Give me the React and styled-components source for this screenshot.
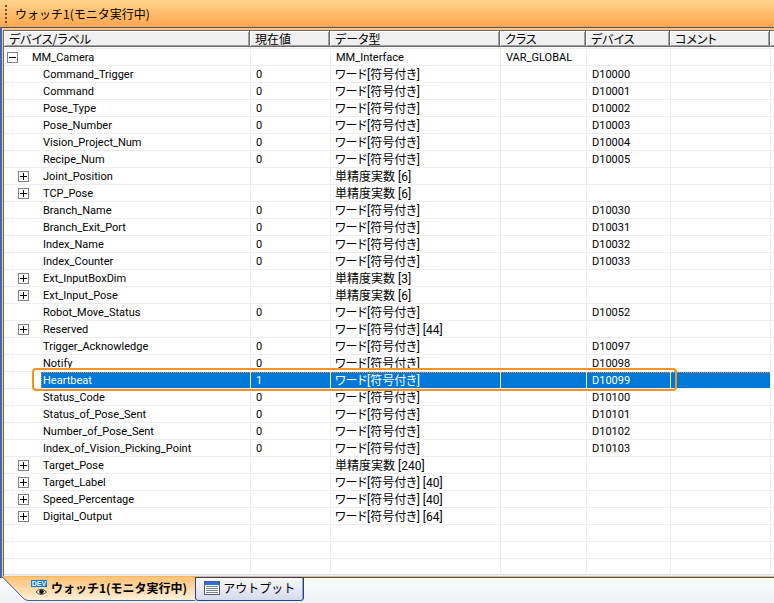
import styled, { createGlobalStyle } from "styled-components";
import { useState } from "react";

const WORD = "ワード[符号付き]";
const REAL = "単精度実数";

const ROWS = [
  { name: "MM_Camera", level: 0, toggle: "minus", type: "MM_Interface", cls: "VAR_GLOBAL" },
  { name: "Command_Trigger", value: "0", type: WORD, device: "D10000" },
  { name: "Command", value: "0", type: WORD, device: "D10001" },
  { name: "Pose_Type", value: "0", type: WORD, device: "D10002" },
  { name: "Pose_Number", value: "0", type: WORD, device: "D10003" },
  { name: "Vision_Project_Num", value: "0", type: WORD, device: "D10004" },
  { name: "Recipe_Num", value: "0", type: WORD, device: "D10005" },
  { name: "Joint_Position", toggle: "plus", type: `${REAL} [6]` },
  { name: "TCP_Pose", toggle: "plus", type: `${REAL} [6]` },
  { name: "Branch_Name", value: "0", type: WORD, device: "D10030" },
  { name: "Branch_Exit_Port", value: "0", type: WORD, device: "D10031" },
  { name: "Index_Name", value: "0", type: WORD, device: "D10032" },
  { name: "Index_Counter", value: "0", type: WORD, device: "D10033" },
  { name: "Ext_InputBoxDim", toggle: "plus", type: `${REAL} [3]` },
  { name: "Ext_Input_Pose", toggle: "plus", type: `${REAL} [6]` },
  { name: "Robot_Move_Status", value: "0", type: WORD, device: "D10052" },
  { name: "Reserved", toggle: "plus", type: `${WORD} [44]` },
  { name: "Trigger_Acknowledge", value: "0", type: WORD, device: "D10097" },
  { name: "Notify", value: "0", type: WORD, device: "D10098" },
  { name: "Heartbeat", value: "1", type: WORD, device: "D10099" },
  { name: "Status_Code", value: "0", type: WORD, device: "D10100" },
  { name: "Status_of_Pose_Sent", value: "0", type: WORD, device: "D10101" },
  { name: "Number_of_Pose_Sent", value: "0", type: WORD, device: "D10102" },
  { name: "Index_of_Vision_Picking_Point", value: "0", type: WORD, device: "D10103" },
  { name: "Target_Pose", toggle: "plus", type: `${REAL} [240]` },
  { name: "Target_Label", toggle: "plus", type: `${WORD} [40]` },
  { name: "Speed_Percentage", toggle: "plus", type: `${WORD} [40]` },
  { name: "Digital_Output", toggle: "plus", type: `${WORD} [64]` },
  {},
  {},
  {},
];

const COLUMNS = [
  { title: "デバイス/ラベル", width: 246 },
  { title: "現在値", width: 80 },
  { title: "データ型", width: 170 },
  { title: "クラス", width: 86 },
  { title: "デバイス", width: 84 },
  { title: "コメント", width: 100 },
  { title: "" },
];

const ToggleIcon = ({ open }) => (
  <svg width="11" height="11" shapeRendering="crispEdges" aria-hidden="true">
    <rect x="0.5" y="0.5" width="10" height="10" fill="#fff" stroke="#808080" />
    <rect x="2" y="5" width="7" height="1" fill="#000" />
    {!open && <rect x="5" y="2" width="1" height="7" fill="#000" />}
  </svg>
);

const WatchIcon = () => (
  <svg width="16" height="16" viewBox="0 0 16 16" aria-hidden="true">
    <rect width="16" height="7" fill="#0a78d8" />
    <text
      x="8"
      y="6"
      textAnchor="middle"
      fill="#fff"
      fontFamily="Liberation Sans, sans-serif"
      fontSize="7"
      fontWeight="700"
    >
      DEV
    </text>
    <path d="M5 12Q10 6.500 15.500 12Q10 17 5 12Z" fill="#fff" stroke="#5a4a40" />
    <circle cx="10.500" cy="11.800" r="2.300" fill="#1c1410" />
  </svg>
);

const OutputIcon = () => (
  <svg width="16" height="14" viewBox="0 0 16 14" shapeRendering="crispEdges" aria-hidden="true">
    <rect x="0.5" y="0.5" width="15" height="13" fill="#fff" stroke="#4a5a80" />
    <rect x="1" y="1" width="14" height="3" fill="#2f6fe0" />
    <path d="M2 5.500h12M2 7.500h12M2 9.500h12M2 11.500h12" stroke="#7c8490" />
  </svg>
);

const TabSlope = () => (
  <svg width="28" height="24" viewBox="0 0 28 24" aria-hidden="true">
    <defs>
      <linearGradient id="slope" x1="0" y1="0" x2="0" y2="1">
        <stop offset="0" stopColor="#ffc274" />
        <stop offset="1" stopColor="#fff0da" />
      </linearGradient>
    </defs>
    <path d="M2 0L22 20Q25 23.500 28 23.500V0Z" fill="url(#slope)" />
    <path d="M0 0.5H3L22 20Q25 23.500 28 23.500" fill="none" stroke="#3f62a0" />
  </svg>
);

const App = () => {
  const [selected, setSelected] = useState("Heartbeat");

  return (
    <Window>
      <GlobalStyle />
      <TitleBar>
        <Grip />
        <Title>ウォッチ1(モニタ実行中)</Title>
      </TitleBar>
      <Frame>
        <Table>
          <colgroup>
            {COLUMNS.map((col, i) => (
              <Col key={i} $width={col.width} />
            ))}
          </colgroup>
          <thead>
            <tr>
              {COLUMNS.map((col, i) => (
                <HeadCell key={i}>
                  <HeadLabel>{col.title}</HeadLabel>
                </HeadCell>
              ))}
            </tr>
          </thead>
          <tbody>
            {ROWS.map((row, i) => {
              const active = !!row.name && row.name === selected;
              return (
                <tr key={i} onClick={() => row.name && setSelected(row.name)}>
                  <Cell>
                    {row.name && (
                      <Tree $level={row.level ?? 1}>
                        {row.toggle ? (
                          <Toggle type="button" aria-label={row.name}>
                            <ToggleIcon open={row.toggle === "minus"} />
                          </Toggle>
                        ) : (
                          <ToggleSpace />
                        )}
                        <Name $active={active}>{row.name}</Name>
                      </Tree>
                    )}
                    {row.name === "Heartbeat" && <Callout />}
                  </Cell>
                  <Cell $active={active}>
                    <Text>{row.value}</Text>
                  </Cell>
                  <Cell $active={active}>
                    <Text $wide={row.type !== "MM_Interface"}>{row.type}</Text>
                  </Cell>
                  <Cell $active={active}>
                    <Text>{row.cls}</Text>
                  </Cell>
                  <Cell $active={active}>
                    <Text>{row.device}</Text>
                  </Cell>
                  <Cell $active={active} />
                  <Cell />
                </tr>
              );
            })}
          </tbody>
        </Table>
      </Frame>
      <TabBar>
        <TabSlope />
        <ActiveTab type="button">
          <WatchIcon />
          ウォッチ1(モニタ実行中)
        </ActiveTab>
        <Tab type="button">
          <OutputIcon />
          アウトプット
        </Tab>
      </TabBar>
    </Window>
  );
};

export default App;

const GlobalStyle = createGlobalStyle`
  * {
    box-sizing: border-box;
  }

  body {
    margin: 0;
    color: #000;
    font-family: Roboto, "Noto Sans CJK JP", sans-serif;
    font-size: 11px;
  }

  button {
    margin: 0;
    padding: 0;
    border: none;
    background: none;
    color: inherit;
  }
`;

const Window = styled.div`
  height: 100vh;
  display: flex;
  flex-direction: column;
  overflow: hidden;
`;

const TitleBar = styled.header`
  flex: none;
  height: 27px;
  display: flex;
  align-items: center;
  gap: 8px;
  padding: 0 5px;
  background: linear-gradient(#ffd48c, #ffa54c);
`;

const Grip = styled.span`
  width: 2px;
  height: 18px;
  background: repeating-linear-gradient(#5c5348 0 2px, transparent 2px 4px);
`;

const Title = styled.h1`
  margin: 0;
  font-family: "Noto Sans CJK JP", sans-serif;
  font-size: 12px;
  font-weight: 400;
  line-height: 16px;
`;

const Frame = styled.main`
  flex: 1;
  min-height: 0;
  overflow: hidden;
  background: #fff;
  border-top: 1px solid #4a5a78;
  border-left: 2px solid #4468a8;
  box-shadow: inset 0 -1px #ffb65c, inset 1px 2px #ffc58a, inset 2px 3px #696969,
    inset 0 -2px #fff, inset 0 -3px #dcdcdc;
  padding: 3px 0 3px 2px;
`;

const Table = styled.table`
  width: 100%;
  table-layout: fixed;
  border-collapse: separate;
  border-spacing: 0;
`;

const Col = styled.col`
  width: ${({ $width }) => ($width ? `${$width}px` : "auto")};
`;

const HeadCell = styled.th`
  height: 18px;
  padding: 0 0 1px;
  border-bottom: 1px solid #ededed;
  text-align: left;
  font-weight: 400;
`;

const HeadLabel = styled.div`
  height: 16px;
  padding-left: 5px;
  overflow: hidden;
  background: #f0f0f0;
  border-right: 1px solid #696969;
  border-bottom: 1px solid #696969;
  box-shadow: inset 1px 1px #fff, inset -1px -1px #a0a0a0;
  font-family: "Noto Sans CJK JP", sans-serif;
  font-feature-settings: "palt";
  font-size: 12px;
  line-height: 15px;
  white-space: nowrap;
`;

const Cell = styled.td`
  position: relative;
  height: 17px;
  padding: 0;
  border-bottom: 1px solid #ededed;
  white-space: nowrap;

  & + & {
    border-left: 1px solid #ededed;
  }

  ${({ $active }) =>
    $active &&
    `
      color: #fff;
      background: #0078d7 linear-gradient(90deg, #ff8728 50%, #0078d7 50%) 0 0 / 2px 1px repeat-x;
      background-clip: padding-box;
    `}
`;

const Text = styled.span`
  display: block;
  height: 16px;
  padding-left: ${({ $wide }) => ($wide ? 4 : 5)}px;
  overflow: hidden;
  font-size: ${({ $wide }) => ($wide ? 12 : 11)}px;
  font-feature-settings: "palt";
  line-height: 18px;
`;

const Tree = styled.div`
  height: 16px;
  display: flex;
  align-items: flex-start;
  gap: 12px;
  padding-left: ${({ $level }) => 3 + $level * 11}px;
`;

const Toggle = styled.button`
  width: 11px;
  height: 11px;
  margin-top: 3px;
  display: flex;
`;

const ToggleSpace = styled.span`
  width: 11px;
`;

const Name = styled.span`
  flex: 1;
  height: 16px;
  padding-left: 2px;
  line-height: 18px;
  ${({ $active }) =>
    $active &&
    `
      color: #fff;
      background:
        linear-gradient(90deg, #ff8728 50%, #0078d7 50%) 0 0 / 2px 1px repeat-x,
        linear-gradient(#ff8728 50%, #0078d7 50%) 0 0 / 1px 2px repeat-y,
        #0078d7;
    `}
`;

const Callout = styled.span`
  position: absolute;
  z-index: 1;
  top: -4px;
  left: 28px;
  width: 645px;
  height: 23px;
  border: 2px solid #f29423;
  border-radius: 4px;
  pointer-events: none;
`;

const TabBar = styled.nav`
  flex: none;
  height: 26px;
  display: flex;
  align-items: flex-start;
  background: linear-gradient(#fafdfe, #f0f0f4);
  box-shadow: inset 0 1px #3f5580;
`;

const TabBase = styled.button`
  height: 24px;
  display: flex;
  align-items: center;
  font-family: "Noto Sans CJK JP", sans-serif;
  font-size: 12px;
  line-height: 16px;
  white-space: nowrap;
`;

const ActiveTab = styled(TabBase)`
  gap: 4px;
  padding: 0 8px 2px 3px;
  background: linear-gradient(#ffc274, #fff0da);
  border-bottom: 1px solid #3f62a0;
  font-weight: 700;
`;

const Tab = styled(TabBase)`
  gap: 3px;
  padding: 0 8px 2px;
  background: linear-gradient(#f8f9fd, #d6daea);
  border: 1px solid #1c4596;
  border-radius: 0 0 3px 3px;
  box-shadow: inset -1px 0 #7ba7ea;
`;
